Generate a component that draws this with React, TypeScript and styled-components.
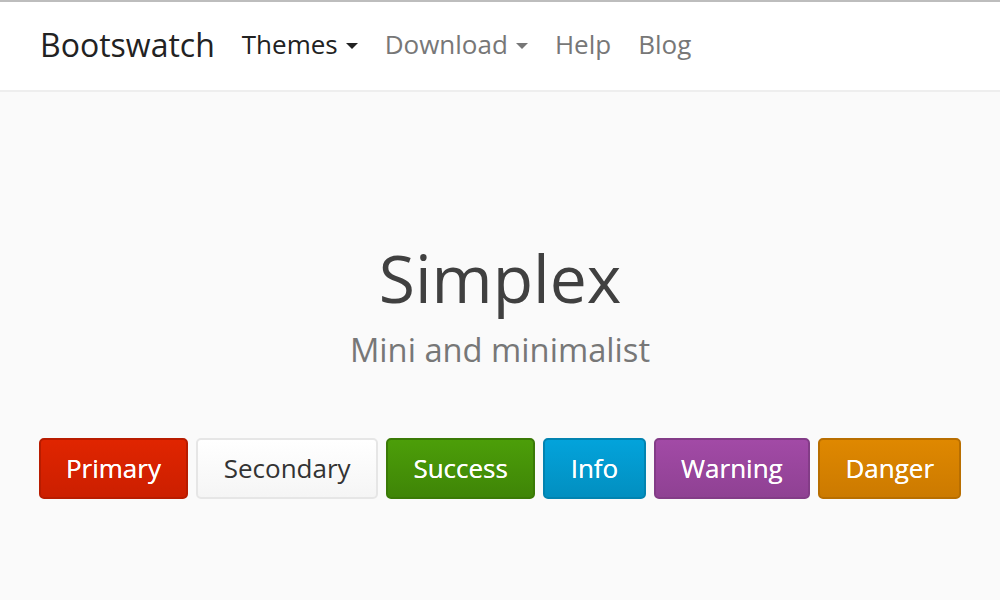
import React from "react";
import styled, { createGlobalStyle } from "styled-components";

const Global = createGlobalStyle`
  html, body { margin: 0; padding: 0; }
  body {
    background: #fafafa;
    font-family: "Open Sans", "Liberation Sans", sans-serif;
    width: 1000px;
    height: 600px;
    overflow: hidden;
  }
`;

const Navbar = styled.nav`
  height: 84px;
  background: #fff;
  border-top: 2px solid #bdbdbd;
  border-bottom: 2px solid #eeeeee;
  display: flex;
  align-items: center;
  padding: 0 0 4px 40px;
  box-sizing: content-box;
`;

const Brand = styled.a`
  font-size: 32px;
  color: #222;
  margin-right: 27px;
`;

const NavItem = styled.a<{ $active?: boolean }>`
  font-size: 26px;
  color: ${(p) => (p.$active ? "#222" : "#777")};
  margin-right: 27px;
  display: flex;
  align-items: center;
`;

const Caret = styled.span<{ $active?: boolean }>`
  display: inline-block;
  width: 0;
  height: 0;
  margin-left: 8px;
  margin-top: 3px;
  border-left: 6px solid transparent;
  border-right: 6px solid transparent;
  border-top: 6px solid ${(p) => (p.$active ? "#222" : "#777")};
`;

const Hero = styled.main`
  display: flex;
  flex-direction: column;
  align-items: center;
  padding-top: 152px;
`;

const Title = styled.h1`
  margin: 0;
  font-size: 66px;
  font-weight: 400;
  color: #404040;
  line-height: 1;
`;

const Subtitle = styled.p`
  margin: 24px 0 0;
  font-size: 32.7px;
  color: #777;
  line-height: 1;
`;

const ButtonRow = styled.div`
  display: flex;
  gap: 8px;
  margin-top: 71px;
`;

const palette: Record<string, { top: string; bottom: string; border: string; color: string }> = {
  primary: { top: "#e02500", bottom: "#cc1f00", border: "#b81c00", color: "#fff" },
  secondary: { top: "#ffffff", bottom: "#f5f5f5", border: "#e6e6e6", color: "#333" },
  success: { top: "#4c9e09", bottom: "#3f8507", border: "#3a7a06", color: "#fff" },
  info: { top: "#03a3db", bottom: "#028fc0", border: "#0283b0", color: "#fff" },
  warning: { top: "#a24aa6", bottom: "#8f4193", border: "#833c87", color: "#fff" },
  danger: { top: "#df8800", bottom: "#cc7a00", border: "#b86e00", color: "#fff" },
};

const Button = styled.button<{ $variant: string }>`
  font-family: "Open Sans", "Liberation Sans", sans-serif;
  font-size: 26px;
  height: 61px;
  padding: 0 25.4px;
  border-radius: 5px;
  cursor: pointer;
  color: ${(p) => palette[p.$variant].color};
  background: linear-gradient(${(p) => palette[p.$variant].top}, ${(p) => palette[p.$variant].bottom});
  border: 2px solid ${(p) => palette[p.$variant].border};
  text-shadow: ${(p) => (p.$variant === "secondary" ? "none" : "0 0 0.4px #fff")};
`;

export default function App() {
  return (
    <>
      <Global />
      <Navbar>
        <Brand>Bootswatch</Brand>
        <NavItem $active>
          Themes<Caret $active />
        </NavItem>
        <NavItem>
          Download<Caret />
        </NavItem>
        <NavItem>Help</NavItem>
        <NavItem>Blog</NavItem>
      </Navbar>
      <Hero>
        <Title>Simplex</Title>
        <Subtitle>Mini and minimalist</Subtitle>
        <ButtonRow>
          <Button $variant="primary">Primary</Button>
          <Button $variant="secondary">Secondary</Button>
          <Button $variant="success">Success</Button>
          <Button $variant="info">Info</Button>
          <Button $variant="warning">Warning</Button>
          <Button $variant="danger">Danger</Button>
        </ButtonRow>
      </Hero>
    </>
  );
}
